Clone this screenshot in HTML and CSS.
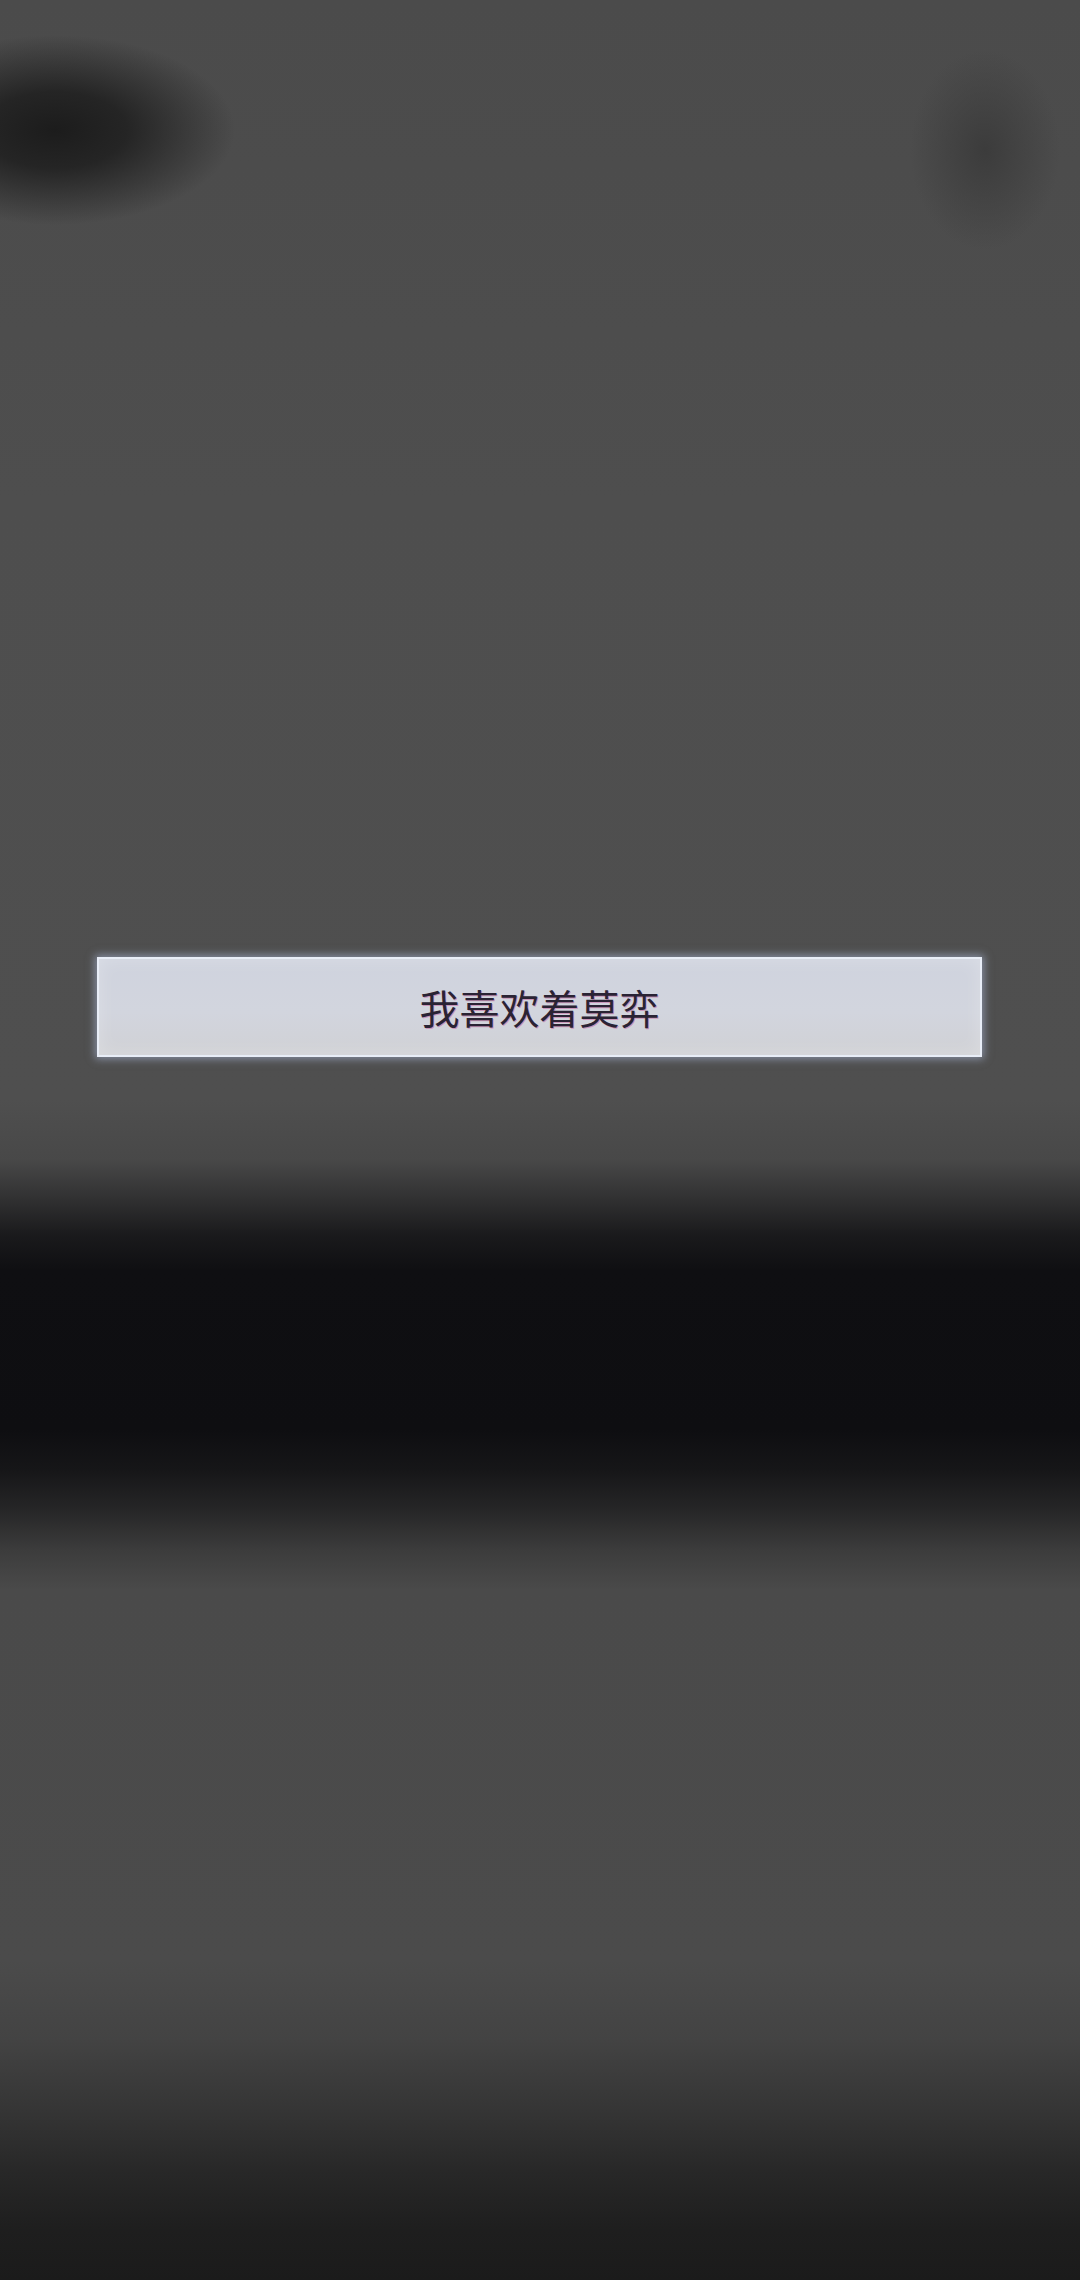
FILE: index.html
```html
<!DOCTYPE html>
<html lang="zh-CN">
<head>
<meta charset="utf-8">
<title>我喜欢着莫弈</title>
<link rel="stylesheet" href="styles.css">
</head>
<body>
<div class="screen">
  <div class="choice">
    <span class="choice-text">我喜欢着莫弈</span>
  </div>
</div>
</body>
</html>
```
FILE: styles.css
```css
html, body {
  margin: 0;
  padding: 0;
}
body {
  width: 1080px;
  height: 2280px;
  overflow: hidden;
  font-family: "Noto Sans CJK SC", "Noto Sans", sans-serif;
}
.screen {
  box-sizing: border-box;
  width: 1080px;
  height: 2280px;
  padding: 957px 98px 0 97px;
  display: flex;
  flex-direction: column;
  background:
    radial-gradient(ellipse 180px 95px at 55px 130px, rgba(28,28,28,1) 0%, rgba(30,30,30,0.85) 40%, rgba(40,40,40,0) 100%),
    radial-gradient(ellipse 75px 100px at 985px 150px, rgba(58,58,58,0.9) 0%, rgba(60,60,60,0.5) 50%, rgba(70,70,70,0) 100%),
    linear-gradient(to bottom,
      #4b4b4b 0px,
      #4e4e4e 500px,
      #4f4f4f 1100px,
      #484848 1160px,
      #303031 1200px,
      #1a1a1c 1235px,
      #0f0f12 1270px,
      #0e0e11 1430px,
      #161618 1470px,
      #262627 1510px,
      #3c3c3c 1550px,
      #4a4a4a 1590px,
      #4b4b4b 1960px,
      #434343 2040px,
      #353535 2110px,
      #282828 2170px,
      #1e1e1e 2230px,
      #1b1b1b 2280px);
}
.choice {
  box-sizing: border-box;
  height: 100px;
  display: flex;
  align-items: center;
  justify-content: center;
  border: 2px solid #e8edf7;
  background: linear-gradient(to bottom, #cfd3de 0%, #d2d5de 55%, #d0d1d5 100%);
  box-shadow: 0 0 8px 2px rgba(180, 195, 230, 0.55), inset 0 0 18px rgba(255, 255, 255, 0.25);
}
.choice-text {
  font-size: 40px;
  line-height: 1;
  color: #2a2334;
  text-shadow: 1px 1px 0 rgba(190, 70, 140, 0.45);
}
```
